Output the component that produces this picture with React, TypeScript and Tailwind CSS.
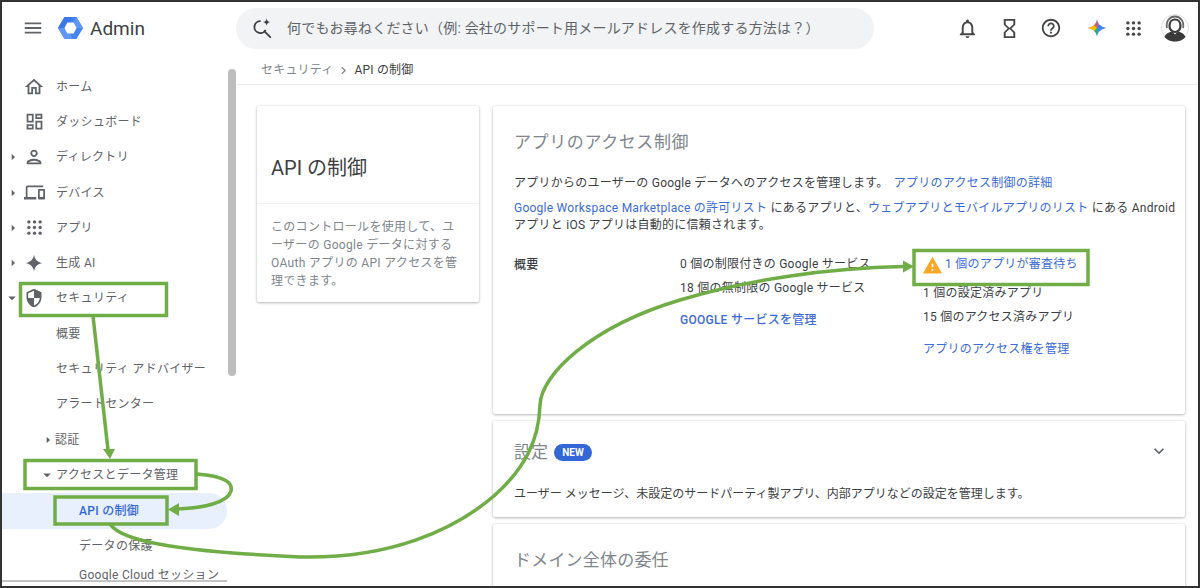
import React from 'react';
import {
  MdMenu,
  MdOutlineHome,
  MdOutlineDashboard,
  MdOutlinePerson,
  MdOutlineDevices,
  MdSecurity,
  MdArrowRight,
  MdArrowDropDown,
  MdOutlineNotifications,
  MdOutlineHourglassEmpty,
  MdHelpOutline,
  MdChevronRight,
  MdExpandMore,
  MdWarning,
} from 'react-icons/md';

const font = { fontFamily: 'Roboto, "Noto Sans CJK JP", sans-serif' };

const Spark = ({ className }: { className?: string }) => (
  <svg viewBox="0 0 24 24" className={className} fill="currentColor">
    <path d="M12 2c.9 5.600 4.400 9.100 10 10-5.600.9-9.100 4.400-10 10-.9-5.600-4.400-9.100-10-10 5.600-.9 9.100-4.400 10-10z" />
  </svg>
);

// round dots, the material icon has square ones
const Dots = () => (
  <svg viewBox="0 0 16 16" className="w-[15px] h-[15px]" fill="currentColor">
    {[2, 8, 14].map(y => [2, 8, 14].map(x => <circle key={`${x}-${y}`} cx={x} cy={y} r="1.800" />))}
  </svg>
);

const Logo = () => (
  <svg viewBox="0 0 26 24" className="w-[27px] h-[24px]">
    <path d="M7 1h12l6.500 11L19 23H7L.5 12z" fill="#4285f4" />
    <path d="M7 1h8l-2 5.500H9.800L7.500 12H.5z" fill="#3b78e7" />
    <path d="M19 1l6.500 11h-7l-2.200-5.500z" fill="#5e97f6" />
    <path d="M.5 12h7l2.300 5.500H13L15 23H7z" fill="#5e97f6" />
    <path d="M9.800 6.500h6.400L19 12l-2.800 5.500H9.800L7 12z" fill="#fff" />
  </svg>
);

const GeminiIcon = () => (
  <svg viewBox="0 0 24 24" className="w-[20px] h-[20px]">
    <path d="M12 1c.5 6 5 10.500 11 11H12z" fill="#7c6fd6" />
    <path d="M12 1c-.5 6-5 10.500-11 11h11z" fill="#ea5a3c" />
    <path d="M1 12c6 .5 10.500 5 11 11V12z" fill="#34a853" />
    <path d="M23 12c-6 .5-10.500 5-11 11V12z" fill="#2f9be0" />
    <path d="M1 12c3-.3 5.500-1.500 7.300-3.500L12 12l-3.500 3.700C6.500 13.500 4 12.300 1 12z" fill="#fbbc04" />
    <path d="M23 12c-3-.3-5.500-1.500-7.300-3.500L12 12l3.500 3.700c2-2.200 4.500-3.400 7.500-3.700z" fill="#4285f4" />
  </svg>
);

const SearchSpark = () => (
  <svg viewBox="0 0 24 24" className="w-[22px] h-[22px]" fill="none" stroke="#3c4043" strokeWidth="2">
    <path d="M15 16l6 6" strokeLinecap="round" />
    <path d="M16 14a6.500 6.500 0 1 1-5.500-9.500" />
    <path d="M17 1.500c.4 2.400 1.600 3.600 4 4-2.400.4-3.600 1.600-4 4-.4-2.400-1.600-3.600-4-4 2.400-.4 3.600-1.600 4-4z" fill="#3c4043" stroke="none" />
  </svg>
);

const Avatar = () => (
  <svg viewBox="0 0 28 28" className="w-[28px] h-[28px]">
    <circle cx="14" cy="14" r="13.500" fill="#fff" stroke="#e0e0e0" />
    <path d="M3.500 23c1.500-4 5-5 8-5.500l2.500 3 2.500-3c3 .5 6.500 1.500 8 5.500-2.500 3-6.500 4.500-10.500 4.500S6 26 3.500 23z" fill="#3a3a3a" />
    <path d="M8.500 12c0-4 2.500-6.500 5.500-6.500s5.500 2.500 5.500 6.500c0 3.500-2.500 6-5.500 6s-5.500-2.500-5.500-6z" fill="none" stroke="#3a3a3a" strokeWidth="2.200" />
    <path d="M6 14C4.500 7 9 2.500 14 2.500S23.500 7 22 14" fill="none" stroke="#6b6b6b" strokeWidth="1.800" />
  </svg>
);

const navItems = [
  { label: 'ホーム', icon: <MdOutlineHome size={22} /> },
  { label: 'ダッシュボード', icon: <MdOutlineDashboard size={21} /> },
  { label: 'ディレクトリ', icon: <MdOutlinePerson size={22} />, arrow: 'right' },
  { label: 'デバイス', icon: <MdOutlineDevices size={21} />, arrow: 'right' },
  { label: 'アプリ', icon: <Dots />, arrow: 'right' },
  { label: '生成 AI', icon: <Spark className="w-[20px] h-[20px]" />, arrow: 'right' },
  { label: 'セキュリティ', icon: <MdSecurity size={20} />, arrow: 'down' },
];

const subItems = ['概要', 'セキュリティ アドバイザー', 'アラートセンター'];

const Link = ({ children }: { children: React.ReactNode }) => <span className="text-[#3b6bd6]">{children}</span>;

const Sidebar = () => (
  <div className="w-[235px] shrink-0 pt-[15px] text-[12px] tracking-[0.3px] text-[#5f6368] relative">
    {navItems.map(item => (
      <div key={item.label} className="h-[35.300px] flex items-center">
        <div className="w-[15px] shrink-0 flex justify-end">
          {item.arrow === 'right' && <MdArrowRight size={16} className="text-[#5f6368] -mr-[4px]" />}
          {item.arrow === 'down' && <MdArrowDropDown size={18} className="text-[#5f6368] -mr-[4px]" />}
        </div>
        <div className="w-[34px] shrink-0 flex justify-center text-[#5f6368]">{item.icon}</div>
        <span className="ml-[5px]">{item.label}</span>
      </div>
    ))}
    {subItems.map(label => (
      <div key={label} className="h-[35.300px] flex items-center pl-[54px]">{label}</div>
    ))}
    <div className="h-[35.300px] flex items-center pl-[38px]">
      <MdArrowRight size={16} className="text-[#5f6368] mr-[-1px]" />
      認証
    </div>
    <div className="h-[35.300px] flex items-center pl-[36px]">
      <MdArrowDropDown size={18} className="text-[#5f6368]" />
      アクセスとデータ管理
    </div>
    <div className="h-[36px] flex items-center pl-[77px] bg-[#e8f0fe] rounded-r-full w-[225px] text-[#3367d6] font-medium">API の制御</div>
    <div className="h-[35.300px] flex items-center pl-[77px]">データの保護</div>
    <div className="h-[16px] overflow-hidden pl-[77px] leading-[22px] whitespace-nowrap">Google Cloud セッション</div>
    <div className="h-[2px] w-[225px] bg-[#c4c4c4]" />
    <div className="absolute right-[1px] top-[15px] w-[8px] h-[307px] rounded-full bg-[#bdbdbd]" />
  </div>
);

const Header = () => (
  <div className="h-[52px] flex items-center shrink-0">
    <div className="w-[234px] shrink-0 flex items-center">
      <MdMenu size={22} className="text-[#5f6368] ml-[20px]" />
      <div className="ml-[13px] flex"><Logo /></div>
      <span className="ml-[6px] text-[19px] leading-none text-[#3c4043]">Admin</span>
    </div>
    <div className="w-[638px] h-[41px] rounded-full bg-[#f1f3f4] flex items-center pl-[15px]">
      <SearchSpark />
      <span className="ml-[14px] text-[14px] tracking-[0.2px] text-[#5f6368] whitespace-nowrap">何でもお尋ねください（例: 会社のサポート用メールアドレスを作成する方法は？）</span>
    </div>
    <div className="flex items-center ml-[82px] text-[#444746]">
      <MdOutlineNotifications size={23} />
      <MdOutlineHourglassEmpty size={23} className="ml-[19px]" />
      <MdHelpOutline size={22} className="ml-[19px]" />
      <div className="ml-[25px]"><GeminiIcon /></div>
      <div className="ml-[19px] flex"><Dots /></div>
      <div className="ml-[20px]"><Avatar /></div>
    </div>
  </div>
);

const Card = ({ className, children }: { className?: string; children: React.ReactNode }) => (
  <div className={`bg-white rounded-[2px] shadow-[0_1px_3px_rgba(60,64,67,0.35),0_0_2px_rgba(60,64,67,0.12)] ${className ?? ''}`}>{children}</div>
);

const Main = () => (
  <div className="flex-1 min-w-0 text-[12px]">
    <div className="h-[31px] border-b border-[#e8eaed] flex items-center pl-[24px] pt-[2px] tracking-[0.2px]">
      <span className="text-[#80868b]">セキュリティ</span>
      <MdChevronRight size={15} className="text-[#80868b] mx-[3px]" />
      <span className="text-[#3c4043]">API の制御</span>
    </div>
    <div className="flex gap-[14px] pl-[20px] pr-[13px] pt-[21px] items-start">
      <Card className="w-[222px] h-[196px] shrink-0">
        <div className="h-[98px] border-b border-[#eeeeee] flex items-end pb-[21px] pl-[14px] text-[20px] leading-[28px] text-[#3c4043]">API の制御</div>
        <div className="px-[14px] pt-[14px] leading-[18px] tracking-[0.3px] text-[#80868b]">
          このコントロールを使用して、ユーザーの Google データに対する OAuth アプリの API アクセスを管理できます。
        </div>
      </Card>
      <div className="flex-1 min-w-0 flex flex-col gap-[7px]">
        <Card className="h-[308px] pl-[21px] pr-[8px] text-[#3c4043] tracking-[0.25px]">
          <div className="pt-[25px] text-[17px] tracking-[0.6px] leading-[22px] text-[#80868b]">アプリのアクセス制御</div>
          <div className="mt-[21px] leading-[18px] whitespace-nowrap">
            アプリからのユーザーの Google データへのアクセスを管理します。 <span className="ml-[2px]"><Link>アプリのアクセス制御の詳細</Link></span>
          </div>
          <div className="mt-[8px] leading-[17px]">
            <Link>Google Workspace Marketplace の許可リスト</Link> にあるアプリと、<Link>ウェブアプリとモバイルアプリのリスト</Link> にある Android
            <br />
            アプリと iOS アプリは自動的に信頼されます。
          </div>
          <div className="flex mt-[21px]">
            <div className="w-[166px] shrink-0 pt-[1px] leading-[18px] font-medium">概要</div>
            <div className="w-[243px] shrink-0 leading-[18px]">
              <div>0 個の制限付きの Google サービス</div>
              <div className="mt-[6px]">18 個の無制限の Google サービス</div>
              <div className="mt-[14px] font-medium"><Link>GOOGLE サービスを管理</Link></div>
            </div>
            <div className="leading-[18px]">
              <div className="flex items-center h-[18px]">
                <MdWarning size={21} className="text-[#f9a825] -ml-[1px] mr-[2px] mt-[3px]" />
                <Link>1 個のアプリが審査待ち</Link>
              </div>
              <div className="mt-[11px]">1 個の設定済みアプリ</div>
              <div className="mt-[6px]">15 個のアクセス済みアプリ</div>
              <div className="mt-[14px]"><Link>アプリのアクセス権を管理</Link></div>
            </div>
          </div>
        </Card>
        <Card className="h-[96px] pl-[21px] pr-[16px] text-[#3c4043]">
          <div className="flex items-center pt-[20px]">
            <span className="text-[17px] leading-[22px] text-[#80868b]">設定</span>
            <span className="ml-[6px] h-[17px] w-[38px] rounded-full bg-[#3367d6] text-white text-[10px] font-bold flex items-center justify-center">NEW</span>
            <MdExpandMore size={20} className="ml-auto text-[#5f6368] -mt-[3px]" />
          </div>
          <div className="mt-[22px] leading-[18px]">ユーザー メッセージ、未設定のサードパーティ製アプリ、内部アプリなどの設定を管理します。</div>
        </Card>
        <Card className="h-[80px] pl-[21px]">
          <div className="pt-[24px] text-[17px] tracking-[0.2px] leading-[24px] text-[#80868b]">ドメイン全体の委任</div>
        </Card>
      </div>
    </div>
  </div>
);

// green annotations painted on top of the screenshot
const Annotations = () => (
  <svg viewBox="0 0 1200 588" className="absolute left-[-2px] top-[-2px] w-[1200px] h-[588px] pointer-events-none" fill="none" stroke="#70ad47" strokeWidth="3.500">
    <rect x="20.500" y="283.500" width="146" height="32" />
    <rect x="25" y="460.500" width="171" height="28" />
    <rect x="55" y="497" width="112" height="27" />
    <rect x="914" y="250.500" width="174" height="34" />
    <path d="M93 316L108 450" />
    <path d="M103 449L110 459L115 449z" fill="#70ad47" stroke="none" />
    <path d="M197 474C225 476 233 483 231 491C228 502 205 508 178 509" />
    <path d="M179 503L168 509.500L179 516z" fill="#70ad47" stroke="none" />
    <path d="M110 524C122 543 190 552 300 557C390 559 455 530 495 495C525 468 539 440 540 405C541 375 590 327 680 300C750 279 830 268 903 266.500" />
    <path d="M903 260.500L914 266.500L903 272.500z" fill="#70ad47" stroke="none" />
  </svg>
);

export default function App() {
  return (
    <div className="w-[1200px] h-[588px] border-2 border-[#333333] bg-white overflow-hidden relative flex flex-col" style={font}>
      <Header />
      <div className="flex flex-1 min-h-0">
        <Sidebar />
        <Main />
      </div>
      <Annotations />
    </div>
  );
}
